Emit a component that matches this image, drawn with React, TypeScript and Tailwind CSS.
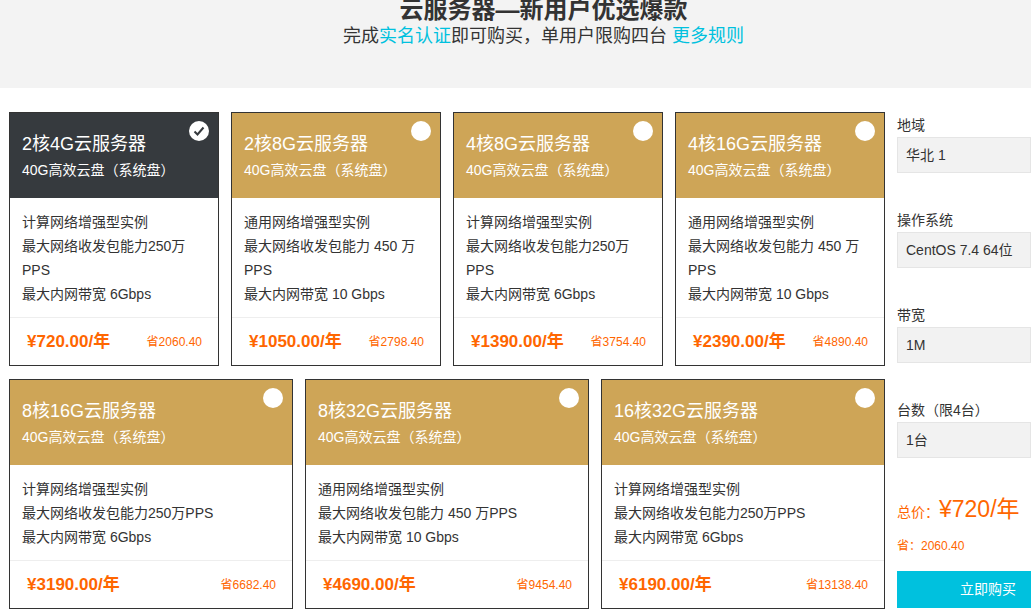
const F = { fontFamily: '"Liberation Sans", "Noto Sans CJK SC", sans-serif' };

type C = { t: string; n: string; l: string[]; p: string; s: string; sel?: boolean };
const row1: C[] = [
  { t: "2核4G云服务器", n: "计算网络增强型实例", l: ["最大网络收发包能力250万", "PPS", "最大内网带宽 6Gbps"], p: "720.00", s: "2060.40", sel: true },
  { t: "2核8G云服务器", n: "通用网络增强型实例", l: ["最大网络收发包能力 450 万", "PPS", "最大内网带宽 10 Gbps"], p: "1050.00", s: "2798.40" },
  { t: "4核8G云服务器", n: "计算网络增强型实例", l: ["最大网络收发包能力250万", "PPS", "最大内网带宽 6Gbps"], p: "1390.00", s: "3754.40" },
  { t: "4核16G云服务器", n: "通用网络增强型实例", l: ["最大网络收发包能力 450 万", "PPS", "最大内网带宽 10 Gbps"], p: "2390.00", s: "4890.40" },
];
const row2: C[] = [
  { t: "8核16G云服务器", n: "计算网络增强型实例", l: ["最大网络收发包能力250万PPS", "最大内网带宽 6Gbps"], p: "3190.00", s: "6682.40" },
  { t: "8核32G云服务器", n: "通用网络增强型实例", l: ["最大网络收发包能力 450 万PPS", "最大内网带宽 10 Gbps"], p: "4690.00", s: "9454.40" },
  { t: "16核32G云服务器", n: "计算网络增强型实例", l: ["最大网络收发包能力250万PPS", "最大内网带宽 6Gbps"], p: "6190.00", s: "13138.40" },
];

function Card({ c, h }: { c: C; h: string }) {
  return (
    <div className={`flex-1 border border-[#333] flex flex-col ${h}`}>
      <div className={`relative h-[85px] shrink-0 px-[12px] pt-[18px] text-white ${c.sel ? "bg-[#363a3e]" : "bg-[#cea557]"}`}>
        <div className="text-[18px] leading-[26px]">{c.t}</div>
        <div className="text-[14px] leading-[24px] mt-[1px]">40G高效云盘（系统盘）</div>
        <div className="absolute right-[9px] top-[8px] w-[20px] h-[20px] rounded-full bg-white flex items-center justify-center">
          {c.sel && (
            <svg width="14" height="14" viewBox="0 0 14 14"><path d="M2.5 7.5 L5.5 10.5 L11.5 3.5" stroke="#363a3e" strokeWidth="2" fill="none" /></svg>
          )}
        </div>
      </div>
      <div className="flex-1 px-[12px] pt-[12px] text-[14px] leading-[24px] text-[#333]">
        <div>{c.n}</div>
        {c.l.map((x) => <div key={x}>{x}</div>)}
      </div>
      <div className="h-[48px] shrink-0 border-t border-[#eee] flex items-center justify-between px-[17px] pr-[16px]">
        <span className="text-[#ff6600] text-[17px] font-bold">¥{c.p}/年</span>
        <span className="text-[#ff6600] text-[12px]">省{c.s}</span>
      </div>
    </div>
  );
}

function Field({ label, val, mt }: { label: string; val: string; mt: string }) {
  return (
    <div className={mt}>
      <div className="text-[14px] text-[#333] leading-[20px]">{label}</div>
      <div className="mt-[2px] h-[36px] bg-[#f2f2f2] border border-[#e5e5e5] flex items-center px-[8px] text-[14px] text-[#333]">{val}</div>
    </div>
  );
}

export default function App() {
  return (
    <div style={F} className="w-[1031px] h-[609px] overflow-hidden bg-white">
      <div className="h-[88px] bg-[#f3f3f3] flex flex-col items-center pl-[56px]">
        <div className="text-[24px] font-bold text-[#333] leading-[28px] -mt-[4px]">云服务器—新用户优选爆款</div>
        <div className="text-[18px] text-[#333] leading-[24px]">
          完成<span className="text-[#00c1de]">实名认证</span>即可购买，单用户限购四台 <span className="text-[#00c1de]">更多规则</span>
        </div>
      </div>
      <div className="flex pl-[9px] pt-[24px]">
        <div className="w-[876px] flex flex-col gap-[13px]">
          <div className="flex gap-[12px]">{row1.map((c) => <Card key={c.t} c={c} h="h-[254px]" />)}</div>
          <div className="flex gap-[12px]">{row2.map((c) => <Card key={c.t} c={c} h="h-[230px]" />)}</div>
        </div>
        <div className="ml-[12px] flex-1 pt-[3px]">
          <Field label="地域" val="华北 1" mt="" />
          <Field label="操作系统" val="CentOS 7.4 64位" mt="mt-[37px]" />
          <Field label="带宽" val="1M" mt="mt-[37px]" />
          <Field label="台数（限4台）" val="1台" mt="mt-[37px]" />
          <div className="mt-[34px] flex items-baseline text-[#ff6600]">
            <span className="text-[14px]">总价：</span>
            <span className="text-[23px]">¥720/年</span>
          </div>
          <div className="mt-[10px] text-[12px] text-[#ff6600]">省：2060.40</div>
          <div className="mt-[16px] h-[37px] bg-[#00c1de] text-white text-[14px] flex items-center pl-[63px]">立即购买</div>
        </div>
      </div>
    </div>
  );
}
